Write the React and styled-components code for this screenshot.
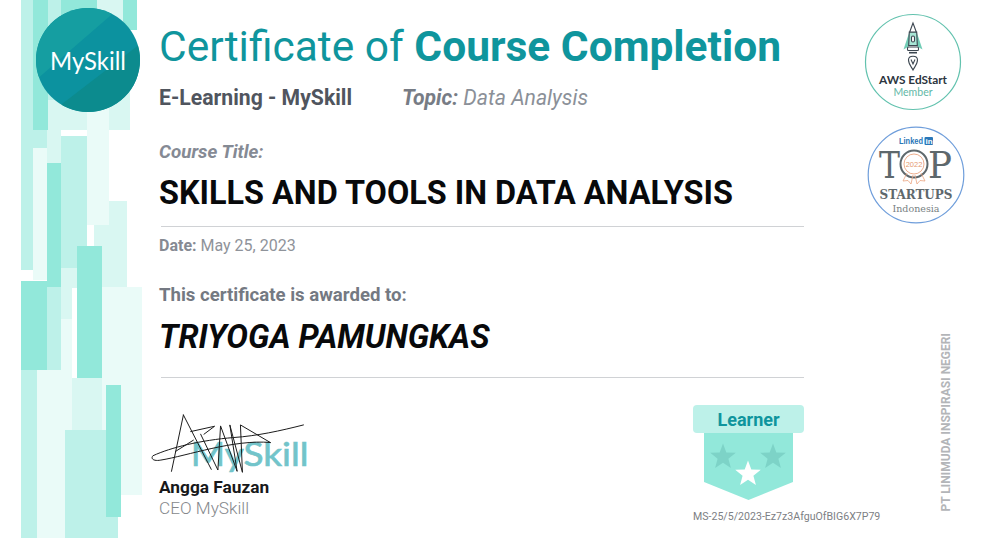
import React from "react";
import styled, { createGlobalStyle } from "styled-components";

const Global = createGlobalStyle`
  html, body { margin: 0; padding: 0; background: #fff; }
  body { font-family: Roboto, "Liberation Sans", sans-serif; }
`;

const Page = styled.div`
  position: relative;
  display: flex;
  width: 997px;
  height: 538px;
  overflow: hidden;
  background: #fff;
`;
const ArtColumn = styled.div`
  flex: 0 0 121px;
  margin-left: 21px;
  height: 538px;
  line-height: 0;
`;
const LogoMark = styled.div`
  position: absolute;
  left: 36px;
  top: 8px;
  width: 104px;
  height: 104px;
`;
const Main = styled.main`
  flex: 0 0 645px;
  margin-left: 17px;
  display: flex;
  flex-direction: column;
`;
const Title = styled.h1`
  margin: 22px 0 0;
  height: 50px;
  font-size: 42.5px;
  line-height: 50px;
  font-weight: 400;
  color: #0f959d;
  white-space: nowrap;
  b { font-weight: 700; }
`;
const MetaRow = styled.div`
  display: flex;
  margin-top: 14px;
  height: 24px;
  line-height: 24px;
  font-size: 21.2px;
  white-space: nowrap;
`;
const Org = styled.span`
  font-weight: 700;
  color: #50555e;
  width: 243px;
`;
const Topic = styled.span`
  font-style: italic;
  color: #8b9098;
  b { font-weight: 700; color: #777c85; }
`;
const Label = styled.div`
  margin-top: 31px;
  height: 22px;
  line-height: 22px;
  font-size: 18.8px;
  font-style: italic;
  font-weight: 700;
  color: #858a94;
`;
const CourseName = styled.div`
  margin-top: 12px;
  height: 36px;
  line-height: 36px;
  font-size: 32.4px;
  font-weight: 700;
  color: #08090b;
  white-space: nowrap;
`;
const Rule = styled.hr`
  margin: ${p => p.$top}px 0 0 2px;
  border: 0;
  border-top: 1px solid #d0d2d5;
  height: 0;
`;
const DateLine = styled.div`
  margin-top: 10px;
  height: 18px;
  line-height: 18px;
  font-size: 16px;
  color: #8f939a;
  b { font-weight: 700; color: #868a93; }
`;
const Awarded = styled.div`
  margin-top: 29px;
  height: 22px;
  line-height: 22px;
  font-size: 18.6px;
  font-weight: 700;
  color: #747982;
`;
const Recipient = styled.div`
  margin-top: 12px;
  height: 38px;
  line-height: 38px;
  font-size: 32.4px;
  font-weight: 700;
  font-style: italic;
  color: #08090b;
  white-space: nowrap;
`;
const Footer = styled.div`
  display: flex;
  justify-content: space-between;
  align-items: flex-start;
  margin-top: 27px;
`;
const Signer = styled.div`
  display: flex;
  flex-direction: column;
  margin-top: 6px;
`;
const SignatureArt = styled.svg`
  display: block;
  margin-left: -12px;
  width: 167px;
  height: 63px;
`;
const SignerName = styled.div`
  margin-top: 3px;
  height: 21px;
  line-height: 20px;
  font-size: 17.3px;
  font-weight: 700;
  color: #17181a;
`;
const SignerRole = styled.div`
  height: 20px;
  line-height: 20px;
  font-size: 17.2px;
  font-weight: 300;
  color: #85888c;
`;
const Award = styled.div`
  width: 111px;
  display: flex;
  flex-direction: column;
  align-items: center;
`;
const Ribbon = styled.div`
  width: 100%;
  height: 28px;
  line-height: 29px;
  border-radius: 4px;
  background: #bdf1e9;
  color: #0f959d;
  font-size: 18px;
  font-weight: 700;
  text-align: center;
`;
const Shield = styled.svg`
  display: block;
  width: 89px;
  height: 67px;
`;
const AwardCode = styled.div`
  align-self: flex-start;
  margin-top: 10px;
  font-size: 10.6px;
  line-height: 13px;
  color: #7d8084;
  white-space: nowrap;
`;
const Aside = styled.aside`
  flex: 1;
  position: relative;
  display: flex;
  flex-direction: column;
  align-items: flex-start;
`;
const BadgeArt = styled.svg`
  display: block;
  margin: ${p => p.$top}px 0 0 ${p => p.$left}px;
  width: 100px;
  height: 100px;
`;
const SideNote = styled.div`
  writing-mode: vertical-rl;
  transform: rotate(180deg);
  margin: 108px 0 0 136px;
  font-size: 12px;
  line-height: 13px;
  font-weight: 700;
  color: #b3b5b8;
  white-space: nowrap;
`;

const L = "#bdf1e9", M = "#92e8da", P = "#d9f7f2", W = "#eafbf8";
const blocks = [
  [76, 0, 33, 130, P],
  [0, 0, 12, 270, L],[12, 0, 15, 130, M],[27, 0, 13, 130, L],[40, 0, 36, 100, M],[102, 0, 14, 30, M],
  [27, 100, 62, 30, P],[12, 130, 14, 18, L],[26, 130, 14, 33, P],
  [12, 148, 14, 132, W],[26, 163, 14, 124, M],[40, 136, 26, 134, L],
  [73, 225, 33, 45, P],[88, 201, 18, 70, P],[40, 268, 41, 20, P],[81, 268, 25, 19, P],
  [66, 100, 22, 125, W],
  [0, 281, 40, 6, M],[0, 287, 26, 83, M],
  [26, 287, 14, 132, L],[40, 287, 11, 32, P],[40, 319, 11, 111, W],
  [81, 287, 40, 208, W],[56, 246, 25, 132, M],[51, 378, 30, 52, P],
  [0, 370, 16, 168, L],[16, 370, 28, 168, W],[26, 419, 18, 119, W],
  [44, 430, 41, 108, L],[85, 495, 12, 43, L],[85, 385, 15, 132, M]
];

const Star = ({ cx, cy, r, fill }) => {
  const pts = [];
  for (let i = 0; i < 10; i++) {
    const a = -Math.PI / 2 + (i * Math.PI) / 5;
    const rr = i % 2 ? r * 0.42 : r;
    pts.push(`${(cx + rr * Math.cos(a)).toFixed(1)},${(cy + rr * Math.sin(a)).toFixed(1)}`);
  }
  return <polygon points={pts.join(" ")} fill={fill} />;
};

export default function App() {
  return (
    <Page>
      <Global />
      <ArtColumn>
        <svg width="121" height="538" viewBox="0 0 121 538">
          {blocks.map(([x, y, w, h, f], i) => (
            <rect key={i} x={x} y={y} width={w} height={h} fill={f} />
          ))}
        </svg>
      </ArtColumn>
      <LogoMark>
        <svg width="104" height="104" viewBox="0 0 104 104">
          <defs>
            <clipPath id="logoClip"><circle cx="52" cy="52" r="52" /></clipPath>
          </defs>
          <g clipPath="url(#logoClip)">
            <rect width="104" height="104" fill="#0c929f" />
            <polygon points="0,0 80,0 74,8 0,72" fill="#159ea1" />
            <polygon points="104,36 104,104 20,104 26,96" fill="#0c8b8e" />
          </g>
          <text x="14" y="62" fill="#fff" fontFamily="Lato, sans-serif" fontSize="25" textLength="76" lengthAdjust="spacingAndGlyphs">MySkill</text>
        </svg>
      </LogoMark>
      <Main>
        <Title>Certificate of <b>Course Completion</b></Title>
        <MetaRow>
          <Org>E-Learning - MySkill</Org>
          <Topic><b>Topic:</b> Data Analysis</Topic>
        </MetaRow>
        <Label>Course Title:</Label>
        <CourseName>SKILLS AND TOOLS IN DATA ANALYSIS</CourseName>
        <Rule $top={15} />
        <DateLine><b>Date:</b> May 25, 2023</DateLine>
        <Awarded>This certificate is awarded to:</Awarded>
        <Recipient>TRIYOGA PAMUNGKAS</Recipient>
        <Rule $top={21} />
        <Footer>
          <Signer>
            <SignatureArt viewBox="20 30 500 190">
              <text x="150" y="195" fontFamily="Lato, sans-serif" fontSize="100" fill="#72c4ca" stroke="#72c4ca" strokeWidth="2" textLength="355" lengthAdjust="spacingAndGlyphs">MySkill</text>
              <g fill="none" stroke="#1a1a1a" strokeWidth="3" strokeLinejoin="round" strokeLinecap="round">
                <path d="M128 42 L92 212 M128 42 L212 206 M104 152 L158 118 M150 92 L222 76 L190 100" />
                <path d="M490 72 C420 90 350 105 280 110 C180 118 90 140 36 165 C28 175 40 182 60 178 C140 165 280 115 390 125" />
                <path d="M180 100 L232 208 L240 75 L290 212 L268 72 L306 215 L300 72 L390 125" />
              </g>
            </SignatureArt>
            <SignerName>Angga Fauzan</SignerName>
            <SignerRole>CEO MySkill</SignerRole>
          </Signer>
          <Award>
            <Ribbon>Learner</Ribbon>
            <Shield viewBox="0 0 89 67">
              <polygon points="0,0 89,0 89,49 44.5,67 0,49" fill="#92e8da" />
              <Star cx={19} cy={24} r={13.5} fill="#7dd3c7" />
              <Star cx={69} cy={24} r={13.5} fill="#7dd3c7" />
              <Star cx={44} cy={41} r={13.5} fill="#ffffff" />
            </Shield>
            <AwardCode>MS-25/5/2023-Ez7z3AfguOfBIG6X7P79</AwardCode>
          </Award>
        </Footer>
      </Main>
      <Aside>
        <BadgeArt $top={11.5} $left={59} viewBox="0 0 100 100">
          <circle cx="50" cy="50" r="47.5" fill="#fff" stroke="#62c2ae" strokeWidth="1.2" />
          <path d="M46 21 L40.5 37.5 L46.5 34 Z M54 21 L59.5 37.5 L53.5 34 Z" fill="#72cdb6" />
          <path d="M46.3 20 L53.7 20 L54.3 33.5 L45.7 33.5 Z" fill="#a8e6d6" stroke="#3c4650" strokeWidth="1.1" />
          <g fill="none" stroke="#3c4650" strokeWidth="1.1">
            <path d="M50 11 L46.7 20 L53.3 20 Z" fill="#fff" />
            <rect x="48.5" y="24" width="3" height="6" rx="1.5" fill="#fff" />
            <rect x="44.5" y="35" width="11" height="3.5" rx="1" />
            <path d="M46 40.7 L54 40.7" strokeWidth="1.6" />
            <path d="M45.5 48 C45.5 43 54.5 43 54.5 48 C54.5 52 51.5 55 50 58 C48.5 55 45.5 52 45.5 48 Z M48 47.5 L50 52 L52 47.5" />
          </g>
          <text x="50" y="71.5" textAnchor="middle" fontFamily="Lato, sans-serif" fontWeight="700" fontSize="12" textLength="68" lengthAdjust="spacingAndGlyphs" fill="#2c3540">AWS EdStart</text>
          <text x="50" y="83.5" textAnchor="middle" fontFamily="Lato, sans-serif" fontSize="10.5" fill="#62b8a6">Member</text>
        </BadgeArt>
        <BadgeArt $top={13.5} $left={62} viewBox="0 0 100 100">
          <circle cx="50" cy="50" r="47.8" fill="#fff" stroke="#6f9edb" strokeWidth="1.2" />
          <text x="33" y="19" fontFamily="Liberation Sans, sans-serif" fontWeight="700" fontSize="9" fill="#2a77b8" textLength="24" lengthAdjust="spacingAndGlyphs">Linked</text>
          <rect x="58.5" y="12" width="8.5" height="8" rx="1" fill="#2a77b8" />
          <text x="59.5" y="19" fontFamily="Liberation Sans, sans-serif" fontWeight="700" fontSize="8" fill="#fff">in</text>
          <text x="13" y="53" fontFamily="DejaVu Serif, serif" fontSize="38" fill="#5e686c" textLength="21" lengthAdjust="spacingAndGlyphs">T</text>
          <circle cx="48" cy="39" r="13.5" fill="none" stroke="#5e686c" strokeWidth="2" />
          <circle cx="48" cy="39" r="10" fill="#fff" stroke="#eaa581" strokeWidth="0.9" />
          <text x="48" y="42" textAnchor="middle" fontFamily="Liberation Sans, sans-serif" fontSize="7.5" fill="#e59a70">2022</text>
          <path d="M41 48 L37 56 L42 55.5 L45 59 L47 50 M55 48 L59 56 L54 55.5 L51 59 L49 50" fill="none" stroke="#eaa581" strokeWidth="0.8" />
          <text x="62" y="53" fontFamily="DejaVu Serif, serif" fontSize="38" fill="#5e686c" textLength="24" lengthAdjust="spacingAndGlyphs">P</text>
          <text x="50" y="74" textAnchor="middle" fontFamily="DejaVu Serif, serif" fontWeight="700" fontSize="12" textLength="73" lengthAdjust="spacingAndGlyphs" fill="#5e686c">STARTUPS</text>
          <text x="50" y="87" textAnchor="middle" fontFamily="DejaVu Serif, serif" fontSize="9.5" fill="#777f83">Indonesia</text>
        </BadgeArt>
        <SideNote>PT LINIMUDA INSPIRASI NEGERI</SideNote>
      </Aside>
    </Page>
  );
}
